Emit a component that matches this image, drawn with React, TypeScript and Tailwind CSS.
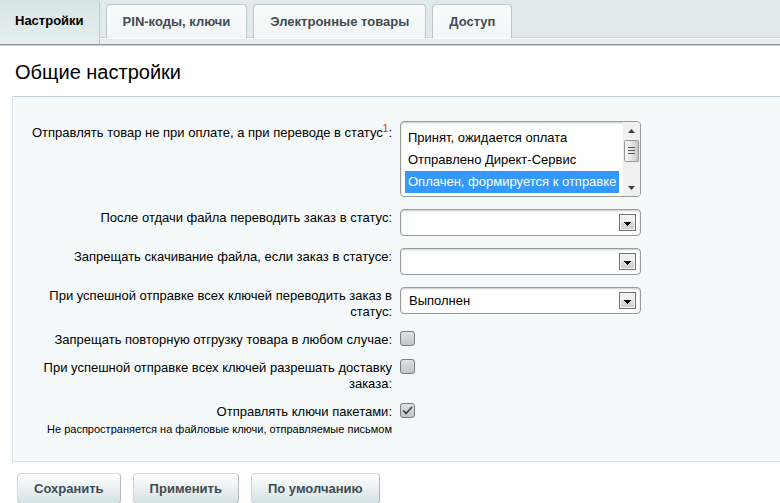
import { useState } from "react"
import type { ReactNode } from "react"

const tabs = ["Настройки", "PIN-коды, ключи", "Электронные товары", "Доступ"]

const statuses = ["Принят, ожидается оплата", "Отправлено Директ-Сервис", "Оплачен, формируется к отправке"]

function Tabs() {
  const [active, setActive] = useState(0)

  return (
    <nav className="border-b border-b-[#8f9a9b] shadow-[0_1px_0_#c3cdce]">
      <div className="flex items-end h-11 bg-[linear-gradient(#e0e9eb_37px,#ccd6d7_37px,#ccd6d7_38px,#fff_38px,#fff_39px,#e5eff0_39px)]">
        {tabs.map((tab, i) =>
          i === active ? (
            <button
              key={tab}
              type="button"
              className="h-11 pb-0.5 px-[15px] mr-1.5 font-bold text-black border-r border-[#bcc8cc] rounded-tr bg-linear-to-b from-[#d9e4e6] to-[#e5eff0]"
            >
              {tab}
            </button>
          ) : (
            <button
              key={tab}
              type="button"
              onClick={() => setActive(i)}
              className="h-[35px] mb-[5px] mr-1.5 px-4 pt-px font-bold text-[#3f4b54] border border-b-white border-[#bcc8cc] rounded-t bg-linear-to-b from-[#fafcfc] to-[#f2f6f6]"
            >
              {tab}
            </button>
          )
        )}
      </div>
    </nav>
  )
}

function Row({ id, label, note, children }: { id: string; label: ReactNode; note?: string; children: ReactNode }) {
  return (
    <div className="flex items-start gap-2">
      <div className="w-[379px] shrink-0 pl-4 text-right">
        <label htmlFor={id} className="block pt-px -mb-px">
          {label}
        </label>
        {note && <p className="mt-1 text-[11px] leading-3">{note}</p>}
      </div>
      {children}
    </div>
  )
}

function ListBox({ id }: { id: string }) {
  return (
    <div className="flex w-[241px] h-[76px] bg-white border border-[#959a9b] rounded shadow-[inset_0_1px_2px_#c5cbcc] overflow-hidden">
      <select
        id={id}
        multiple
        size={3}
        defaultValue={[statuses[2]]}
        className="flex-1 h-[74px] pt-[5px] px-1 bg-transparent outline-none [scrollbar-width:none]"
      >
        {statuses.map((s) => (
          <option
            key={s}
            value={s}
            className="h-[22px] py-[3px] pl-[3px] pr-0 leading-4 checked:text-white checked:bg-linear-to-b checked:from-[#3399ff] checked:to-[#3399ff]"
          >
            {s}
          </option>
        ))}
      </select>
      <svg width="17" height="74" viewBox="0 0 17 74" className="shrink-0" aria-hidden="true">
        <defs>
          <linearGradient id="thumb" x1="0" x2="1" y1="0" y2="0">
            <stop offset="0" stopColor="#f5f5f5" />
            <stop offset="0.5" stopColor="#e6e6e8" />
            <stop offset="1" stopColor="#c4c4c8" />
          </linearGradient>
        </defs>
        <rect width="17" height="74" fill="#f0f0f0" />
        <path d="M5 11h7L8.500 7z" fill="#404040" />
        <path d="M5 64h7L8.500 68z" fill="#404040" />
        <rect x="1.500" y="18.500" width="14" height="21" rx="1" fill="url(#thumb)" stroke="#979797" />
        <path d="M5 25.500h7M5 28.500h7M5 31.500h7" stroke="#55585c" />
      </svg>
    </div>
  )
}

function Select({ id, options }: { id: string; options: string[] }) {
  return (
    <div className="relative w-[241px]">
      <select
        id={id}
        className="block w-full h-[27px] pl-2 pr-7 appearance-none bg-white border border-[#959a9b] rounded shadow-[inset_0_1px_2px_#c5cbcc] outline-none"
      >
        {options.map((o) => (
          <option key={o}>{o}</option>
        ))}
      </select>
      <svg width="17" height="17" viewBox="0 0 17 17" className="absolute right-[5px] top-[5px] pointer-events-none" aria-hidden="true">
        <defs>
          <linearGradient id={id + "-arrow"} x1="0" x2="0" y1="0" y2="1">
            <stop offset="0.5" stopColor="#f0f0f0" />
            <stop offset="0.5" stopColor="#dedede" />
            <stop offset="1" stopColor="#cfcfcf" />
          </linearGradient>
        </defs>
        <rect x="0.500" y="0.500" width="16" height="16" fill="#f6f6f6" stroke="#707070" />
        <rect x="2" y="2" width="13" height="13" fill={`url(#${id}-arrow)`} />
        <path d="M5 8h7v1h-1v1h-1v1h-1v1h-1v-1h-1v-1h-1v-1h-1z" fill="#000" />
      </svg>
    </div>
  )
}

function Checkbox({ id, defaultChecked }: { id: string; defaultChecked?: boolean }) {
  return (
    <span className="relative block size-4">
      <input
        id={id}
        type="checkbox"
        defaultChecked={defaultChecked}
        className="peer block size-[15px] appearance-none border border-[#757e82] rounded-[3px] bg-linear-to-b from-[#dfe1e4] to-[#c2c6c9]"
      />
      <svg width="15" height="15" viewBox="0 0 15 15" className="absolute left-0 top-0 hidden peer-checked:block pointer-events-none" aria-hidden="true">
        <path d="M3.300 7.500L6 10.500L12 4" fill="none" stroke="#3c4246" strokeWidth="1.800" />
      </svg>
    </span>
  )
}

function Button({ children }: { children: ReactNode }) {
  return (
    <button
      type="button"
      className="h-[31px] px-4 font-bold text-[#3f4b54] border border-[#d3d9db] border-r-[#b3b9bb] border-b-[#b3b9bb] rounded bg-linear-to-b from-white to-[#d5e1e5]"
    >
      {children}
    </button>
  )
}

export default function App() {
  return (
    <div className="overflow-hidden bg-white text-black text-[13px] leading-4 font-['Liberation_Sans',Arial,sans-serif]">
      <Tabs />

      <main>
        <h1 className="mt-[15px] pl-[15px] text-xl leading-6">Общие настройки</h1>

        <form>
          <div className="flex flex-col gap-3 mt-3 ml-3 pt-6 pb-[26px] bg-[#f5f9f9] border border-r-0 border-[#dce7ed] border-t-[#c3cfd6]">
            <Row
              id="send-status"
              label={
                <span className="block pt-[3px]">
                  Отправлять товар не при оплате, а при переводе в статус
                  <sup className="text-[10px] text-[#e02020]">1</sup>:
                </span>
              }
            >
              <ListBox id="send-status" />
            </Row>
            <Row id="after-file" label="После отдачи файла переводить заказ в статус:">
              <Select id="after-file" options={["", ...statuses]} />
            </Row>
            <Row id="deny-download" label="Запрещать скачивание файла, если заказ в статусе:">
              <Select id="deny-download" options={["", ...statuses]} />
            </Row>
            <Row id="after-keys" label="При успешной отправке всех ключей переводить заказ в статус:">
              <Select id="after-keys" options={["Выполнен", ...statuses]} />
            </Row>
            <Row id="deny-resend" label="Запрещать повторную отгрузку товара в любом случае:">
              <Checkbox id="deny-resend" />
            </Row>
            <Row id="allow-delivery" label="При успешной отправке всех ключей разрешать доставку заказа:">
              <Checkbox id="allow-delivery" />
            </Row>
            <Row
              id="packets"
              label="Отправлять ключи пакетами:"
              note="Не распространяется на файловые ключи, отправляемые письмом"
            >
              <Checkbox id="packets" defaultChecked />
            </Row>
          </div>

          <div className="flex gap-3 pt-[11px] pl-[17px]">
            <Button>Сохранить</Button>
            <Button>Применить</Button>
            <Button>По умолчанию</Button>
          </div>
        </form>
      </main>
    </div>
  )
}
